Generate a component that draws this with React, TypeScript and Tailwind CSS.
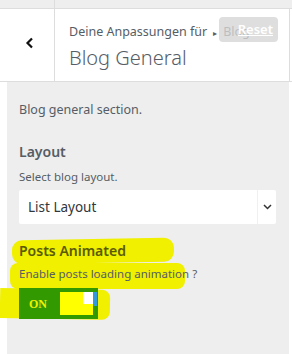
const App = () => {
  return (
    <div className="w-[292px] h-[354px] bg-white overflow-hidden text-[#555d66]" style={{ fontFamily: '"Segoe UI", "Noto Sans", sans-serif' }}>
      <div className="flex h-[9px] bg-[#eeeeee] border-b border-[#dddddd]">
        <div className="w-[55px] border-r border-[#dddddd]" />
      </div>
      <div className="flex h-[73px] border-b border-[#dddddd]">
        <div className="w-[55px] border-r border-[#dddddd] flex items-center justify-center">
          <svg width="10" height="12" viewBox="0 0 10 12" className="ml-[6px] -mt-[4px]">
            <path d="M7 1.5 L2.5 6 L7 10.5" stroke="#111" strokeWidth="2.2" fill="none" />
          </svg>
        </div>
        <div className="relative flex-1 pl-[14px] pt-[15px] border-r border-[#dddddd] mr-[2px]">
          <div className="text-[12.5px] leading-[16px] text-[#555d66]">
            Deine Anpassungen für<span className="text-[8px] align-middle mx-[6px]">▸</span>Blog
          </div>
          <div className="text-[20px] leading-[26px] font-light text-[#555d66] mt-[4px]">Blog General</div>
          <div className="absolute left-[164px] top-[8px] w-[59px] h-[25px] rounded-[4px] bg-[#d6d6d6]/80 flex items-center justify-end pr-[5px]">
            <span className="text-[13px] font-semibold text-white underline">Reset</span>
          </div>
        </div>
      </div>
      <div className="mx-[7px] mr-[3px] h-[272px] bg-[#eeeeee] pl-[12px] pr-[13px] pt-[19px]">
        <div className="text-[12.5px] leading-[18px] text-[#555d66]">Blog general section.</div>
        <div className="mt-[23px] text-[14px] font-semibold leading-[20px] text-[#555d66]">Layout</div>
        <div className="mt-[7px] text-[11.5px] leading-[16px] text-[#555d66]">Select blog layout.</div>
        <div className="mt-[5px] h-[34px] bg-white flex rounded-[2px]">
          <div className="flex-1 flex items-center pl-[9px] text-[13.5px] text-[#32373c]">List Layout</div>
          <div className="w-[19px] border-l border-[#f0f0f0] flex items-center justify-center">
            <svg width="9" height="6" viewBox="0 0 9 6">
              <path d="M1 1 L4.5 4.5 L8 1" stroke="#333" strokeWidth="1.5" fill="none" />
            </svg>
          </div>
        </div>
        <div className="relative mt-[13px] -ml-[7px]">
          <div className="absolute left-0 top-[2px] w-[162px] h-[24px] bg-[#f0f000] rounded-[10px] -rotate-1" />
          <div className="absolute left-[-2px] top-[26px] w-[175px] h-[26px] bg-[#f0f000] rounded-[8px]" />
          <div className="absolute left-[-12px] top-[52px] w-[110px] h-[30px] bg-[#f0f000] rounded-r-[8px] rotate-1" />
          <div className="relative pl-[7px]">
            <div className="text-[14px] font-semibold leading-[20px] pt-[4px] text-[#5a5a00]">Posts Animated</div>
            <div className="mt-[5px] text-[11.5px] leading-[16px] text-[#555d66]">Enable posts loading animation ?</div>
            <div className="mt-[6px] w-[79px] h-[31px] bg-[#339900] flex items-center pl-[10px] pr-[5px]">
              <span className="text-[12px] font-bold text-[#f0f000]" style={{ fontFamily: '"Liberation Serif", serif' }}>ON</span>
              <div className="ml-auto relative w-[33px] h-[23px] bg-[#ffff00]">
                <div className="absolute right-0 top-0 w-[10px] h-[12px] bg-white" />
                <div className="absolute -right-[4px] top-0 w-[4px] h-[14px] bg-[#3399dd]" />
              </div>
            </div>
          </div>
        </div>
      </div>
    </div>
  )
}

export default App
